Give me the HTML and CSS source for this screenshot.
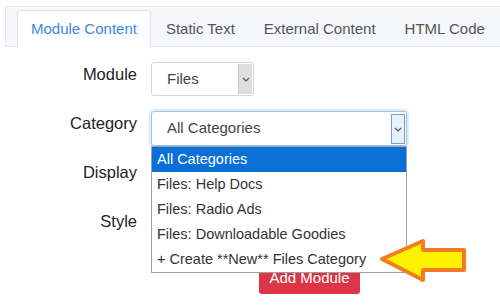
FILE: index.html
```html
<!DOCTYPE html>
<html>
<head>
<meta charset="utf-8">
<link rel="stylesheet" href="styles.css">
</head>
<body>
<div class="tabs">
  <div class="tab active">Module Content</div>
  <div class="tab">Static Text</div>
  <div class="tab">External Content</div>
  <div class="tab">HTML Code</div>
</div>
<div class="form">
  <div class="row">
    <div class="label">Module</div>
    <div class="select small"><span class="value">Files</span><span class="arrow"><svg width="8" height="5" viewBox="0 0 8 5"><polyline points="1,1 4,4 7,1" fill="none" stroke="#555" stroke-width="1.2"/></svg></span></div>
  </div>
  <div class="row">
    <div class="label">Category</div>
    <div class="select-wrap">
      <div class="select wide focus"><span class="value">All Categories</span><span class="arrow"><svg width="8" height="5" viewBox="0 0 8 5"><polyline points="1,1 4,4 7,1" fill="none" stroke="#555" stroke-width="1.2"/></svg></span></div>
      <ul class="listbox">
        <li class="selected">All Categories</li>
        <li>Files: Help Docs</li>
        <li>Files: Radio Ads</li>
        <li>Files: Downloadable Goodies</li>
        <li>+ Create **New** Files Category</li>
      </ul>
    </div>
  </div>
  <div class="row">
    <div class="label">Display</div>
    <div class="select wide"></div>
  </div>
  <div class="row">
    <div class="label">Style</div>
    <div class="select wide"></div>
  </div>
  <div class="actions">
    <button class="btn">Add Module</button>
  </div>
</div>
<svg class="pointer" width="96" height="50" viewBox="0 0 96 50">
  <polygon points="4,21 45,3 45,12 86,12 86,32 45,32 45,42" fill="#fff200" stroke="#f47c20" stroke-width="4" stroke-linejoin="round"/>
</svg>
</body>
</html>
```

FILE: styles.css
```css
* { box-sizing: border-box; }
html, body { margin: 0; padding: 0; background: #fff; }
body {
  font-family: "Liberation Sans", Arial, sans-serif;
  color: #222;
  width: 500px;
  height: 305px;
  overflow: hidden;
  position: relative;
}
.tabs {
  display: flex;
  align-items: flex-end;
  margin: 6px 0 0 5px;
  height: 41px;
  padding: 3px 0 0 11px;
  background: #f5f7fa;
  border: 1px solid #e4e7eb;
  border-right: none;
}
.tab {
  height: 37px;
  margin-bottom: -1px;
  margin-right: 1px;
  padding: 0 13px;
  border: 1px solid transparent;
  border-radius: 4px 4px 0 0;
  font-size: 15px;
  line-height: 35px;
  color: #555;
  white-space: nowrap;
}
.tab.active {
  background: #fff;
  border-color: #dfe3e8 #dfe3e8 #fff;
  color: #3b89de;
}
.form {
  display: flex;
  flex-direction: column;
  gap: 15px;
  margin-top: 15px;
}
.row {
  display: flex;
  align-items: flex-start;
  gap: 14px;
  height: 34px;
}
.label {
  width: 137px;
  text-align: right;
  font-size: 16.5px;
  line-height: 24px;
  color: #222;
}
.select-wrap { position: relative; }
.select {
  display: flex;
  align-items: stretch;
  height: 34px;
  border: 1px solid #d6d9dc;
  border-radius: 3px;
  background: #fff;
  font-size: 15px;
  color: #444;
}
.select.small { width: 103px; }
.select.wide { width: 256px; }
.select.focus {
  border-color: #9cc6ee;
  box-shadow: 0 0 0 2px rgba(120, 175, 230, 0.25);
  height: 35px;
}
.value {
  flex: 1;
  padding-left: 15px;
  line-height: 32px;
  white-space: nowrap;
}
.arrow {
  width: 14px;
  margin: 1px 1px 1px 0;
  background: #dedede;
  border-left: 1px solid #c8c8c8;
  display: flex;
  align-items: center;
  justify-content: center;
}
.select.focus .arrow {
  background: #e5f1fb;
  border: 1px solid #6aa6dc;
  margin: 2px 1px 1px 0;
}
.listbox {
  position: absolute;
  top: 35px;
  left: 0;
  width: 256px;
  margin: 0;
  padding: 0;
  list-style: none;
  background: #fff;
  border: 1px solid #a0a0a0;
  z-index: 2;
}
.listbox li {
  height: 25px;
  line-height: 25px;
  padding-left: 5px;
  font-size: 14.5px;
  color: #333;
  white-space: nowrap;
}
.listbox li.selected {
  background: #0a70d8;
  color: #fff;
}
.actions {
  margin-top: 3px;
  padding-left: 259px;
}
.btn {
  width: 101px;
  height: 33px;
  border: none;
  border-radius: 3px;
  background: #dc3545;
  color: #fff;
  font-family: "Liberation Sans", Arial, sans-serif;
  font-size: 15px;
  padding: 0;
}
.pointer {
  position: absolute;
  left: 378px;
  top: 238px;
  z-index: 3;
}
```
